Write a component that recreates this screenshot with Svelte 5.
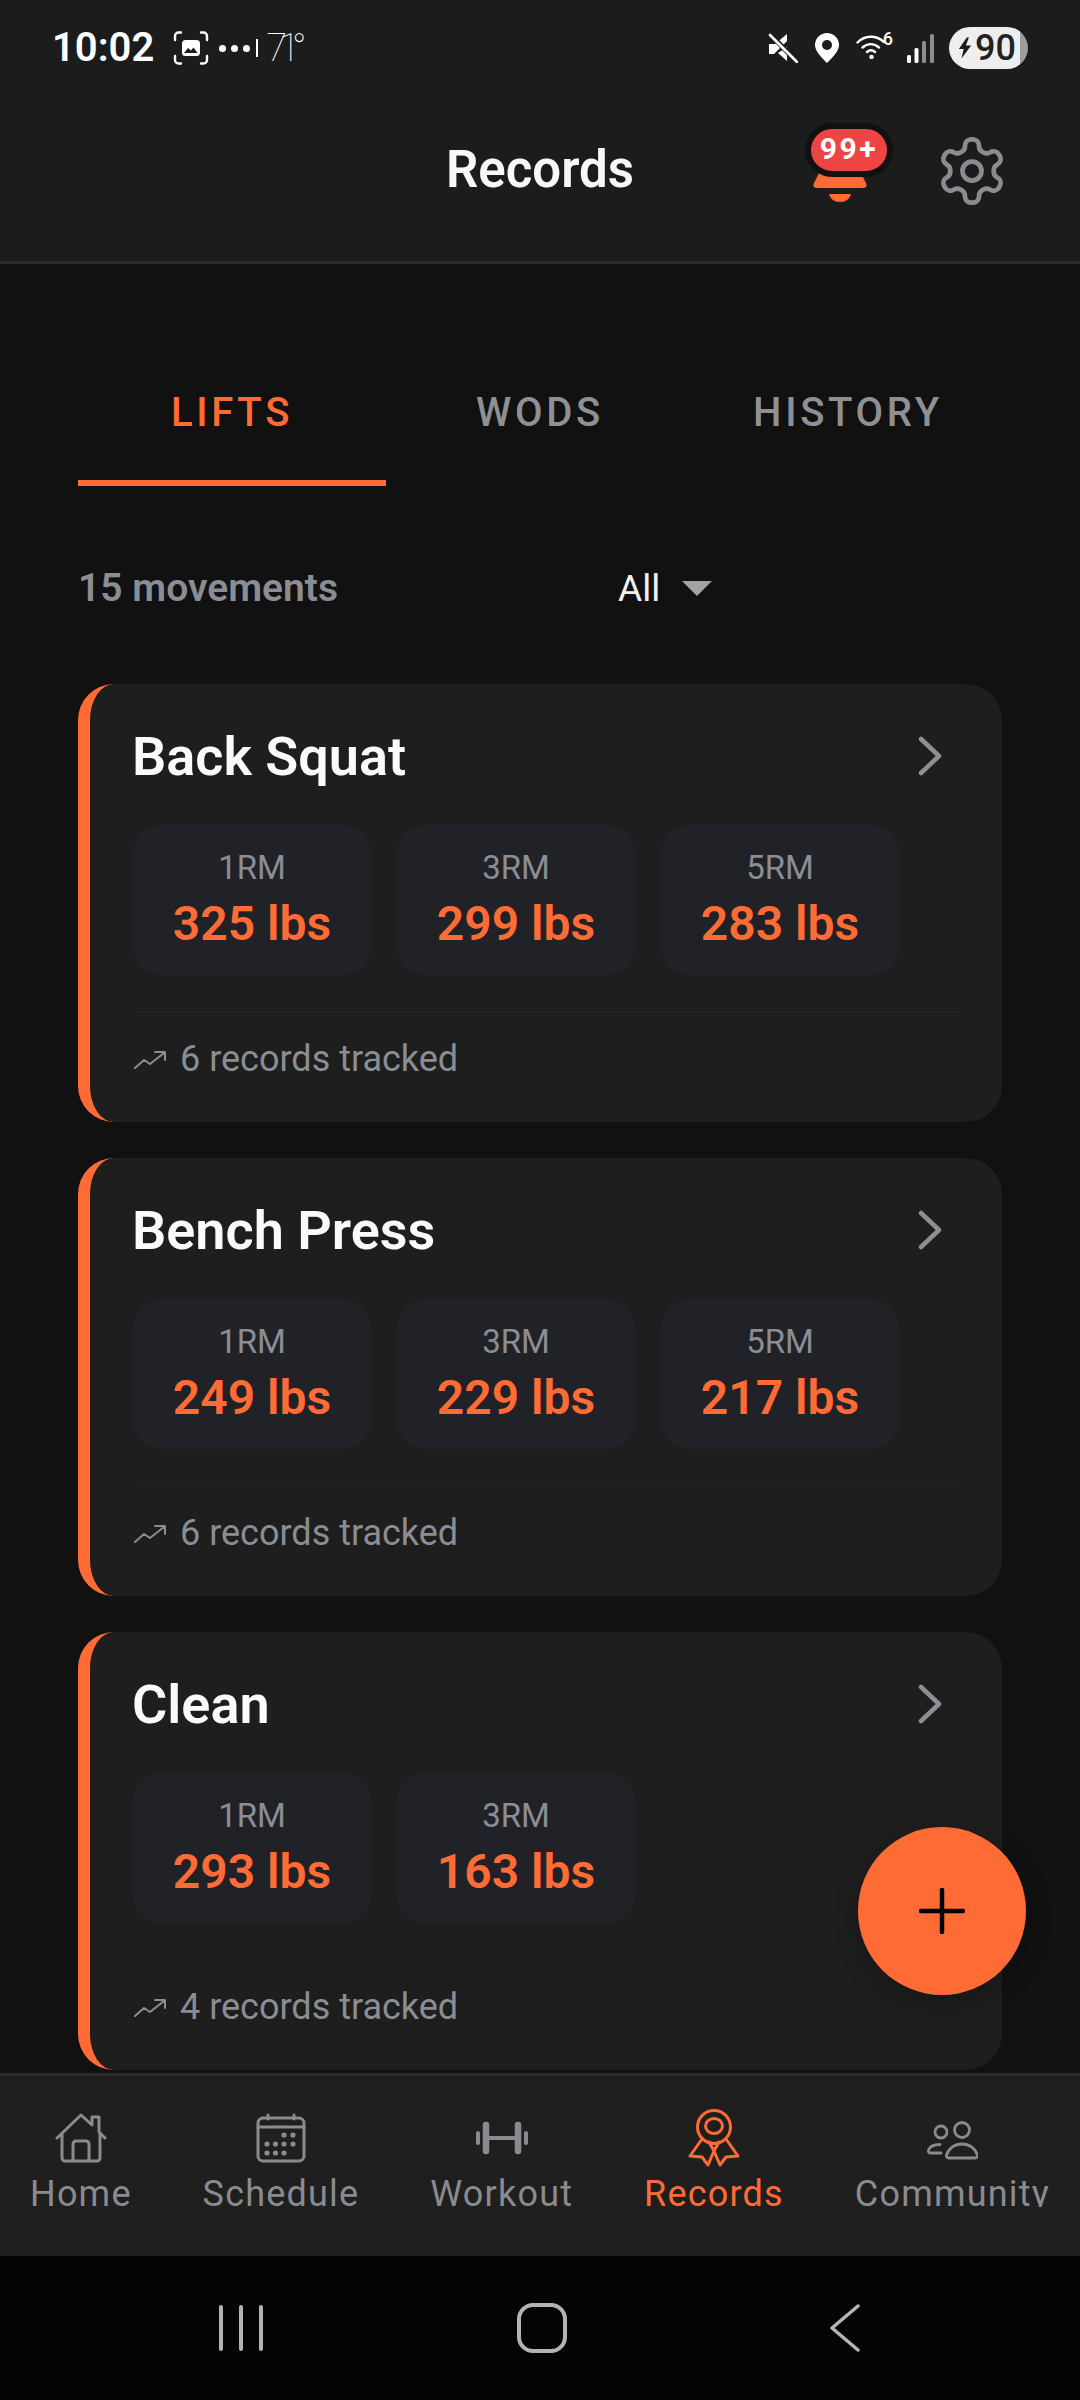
<script lang="ts">
  type Stat = { label: string; value: string };
  type Lift = { name: string; stats: Stat[]; count: number };

  const lifts: Lift[] = [
    {
      name: "Back Squat",
      count: 6,
      stats: [
        { label: "1RM", value: "325 lbs" },
        { label: "3RM", value: "299 lbs" },
        { label: "5RM", value: "283 lbs" },
      ],
    },
    {
      name: "Bench Press",
      count: 6,
      stats: [
        { label: "1RM", value: "249 lbs" },
        { label: "3RM", value: "229 lbs" },
        { label: "5RM", value: "217 lbs" },
      ],
    },
    {
      name: "Clean",
      count: 4,
      stats: [
        { label: "1RM", value: "293 lbs" },
        { label: "3RM", value: "163 lbs" },
      ],
    },
  ];

  const tabs = ["LIFTS", "WODS", "HISTORY"];
  let active = $state("LIFTS");
</script>

<div class="screen">
  <header class="header">
    <div class="status">
      <div class="status-left">
        <span class="time">10:02</span>
        <svg class="shot" viewBox="0 0 36 34" fill="none" stroke="#fff" stroke-width="2.4" stroke-linecap="round">
          <path d="M2 9V5a3.5 3.5 0 0 1 3.5-3.5H8M28 1.500h2.500A3.500 3.500 0 0 1 34 5v4M34 25v4a3.500 3.500 0 0 1-3.500 3.500H28M8 32.500H5.500A3.500 3.500 0 0 1 2 29v-4" />
          <rect x="9" y="9" width="18" height="16" rx="3.500" fill="#fff" stroke="none" />
          <path d="M11 22l4-5 3 2.500 2.500-3 4 5.500z" fill="#1c1c1c" stroke="none" />
        </svg>
        <span class="dots"><i></i><i></i><i></i></span>
        <span class="tick"></span>
        <span class="temp">71°</span>
      </div>
      <div class="status-right">
        <svg class="mute" viewBox="0 0 30 30">
          <path d="M1 11h6l12-10v7L6 21H1z" fill="#fff" />
          <path d="M10 20l9 8V14z" fill="#fff" />
          <path d="M3 2l26 27" stroke="#1c1c1c" stroke-width="5" />
          <path d="M2 2l27 27" stroke="#fff" stroke-width="2.600" stroke-linecap="round" />
        </svg>
        <svg class="pin" viewBox="0 0 24 30">
          <path fill-rule="evenodd" fill="#fff" d="M12 0a12 12 0 0 1 12 12c0 6-6 12-12 18C6 24 0 18 0 12A12 12 0 0 1 12 0zm0 7a5 5 0 1 0 0 10 5 5 0 0 0 0-10z" />
        </svg>
        <svg class="wifi" viewBox="0 0 30 26" fill="none" stroke="#fff" stroke-width="2.400" stroke-linecap="round">
          <path d="M1.500 9.500C9 2 20 2 28 9M6.500 14.500c5-4.500 11.500-4.500 16.500 0M11 19c2.500-2.200 5.500-2.200 8 0" />
          <circle cx="15.500" cy="24" r="2.200" fill="#fff" stroke="none" />
        </svg>
        <span class="wifi-num">6</span>
        <svg class="signal" viewBox="0 0 27 29">
          <rect x="0" y="21" width="4" height="8" rx="1.500" fill="#fff" />
          <rect x="7.500" y="14" width="4" height="15" rx="1.500" fill="#fff" />
          <rect x="15" y="7" width="4" height="22" rx="1.500" fill="#8c8c8c" />
          <rect x="23" y="0" width="4" height="29" rx="1.500" fill="#8c8c8c" />
        </svg>
        <div class="battery">
          <svg class="bolt" viewBox="0 0 16 24"><path d="M10 0L1 13h5.500L4 24l11-15H9l3.500-9z" fill="#1c1c1c" /></svg>
          <span>90</span>
        </div>
      </div>
    </div>
    <div class="toolbar">
      <h1>Records</h1>
      <div class="actions">
        <div class="bell">
          <svg viewBox="0 0 54 55">
            <path d="M12 0h30l5 24 6 12c1.500 2.500 0 5-3 5H4c-3 0-4.500-2.500-3-5l6-12z" fill="#ff6b35" />
            <path d="M16 47h22c-1 4.500-5 8-11 8s-10-3.500-11-8z" fill="#ff6b35" />
          </svg>
          <span class="badge">99+</span>
        </div>
        <svg class="gear" viewBox="0 0 24 24" fill="none" stroke="#8b8c91" stroke-width="1.500" stroke-linecap="round" stroke-linejoin="round">
          <path d="M12.220 2h-.44a2 2 0 0 0-2 2v.18a2 2 0 0 1-1 1.730l-.43.25a2 2 0 0 1-2 0l-.15-.08a2 2 0 0 0-2.730.73l-.22.38a2 2 0 0 0 .73 2.730l.15.1a2 2 0 0 1 1 1.720v.51a2 2 0 0 1-1 1.740l-.15.09a2 2 0 0 0-.73 2.730l.22.38a2 2 0 0 0 2.730.73l.15-.08a2 2 0 0 1 2 0l.43.25a2 2 0 0 1 1 1.730V20a2 2 0 0 0 2 2h.44a2 2 0 0 0 2-2v-.18a2 2 0 0 1 1-1.730l.43-.25a2 2 0 0 1 2 0l.15.08a2 2 0 0 0 2.730-.73l.22-.39a2 2 0 0 0-.73-2.730l-.15-.08a2 2 0 0 1-1-1.740v-.5a2 2 0 0 1 1-1.740l.15-.09a2 2 0 0 0 .73-2.730l-.22-.38a2 2 0 0 0-2.730-.73l-.15.08a2 2 0 0 1-2 0l-.43-.25a2 2 0 0 1-1-1.730V4a2 2 0 0 0-2-2z" />
          <circle cx="12" cy="12" r="3" />
        </svg>
      </div>
    </div>
  </header>

  <main class="main">
    <div class="tabs">
      {#each tabs as tab}
        <button type="button" class="tab" class:active={active === tab} onclick={() => (active = tab)}>{tab}</button>
      {/each}
    </div>

    <div class="summary">
      <span class="count">15 movements</span>
      <div class="filter">
        <span>All</span>
        <i class="caret"></i>
      </div>
    </div>

    <div class="list">
      {#each lifts as lift}
        <article class="card">
          <div class="card-head">
            <h2>{lift.name}</h2>
            <svg class="chev" viewBox="0 0 24 40" fill="none" stroke="#8e8f94" stroke-width="4.500" stroke-linecap="round" stroke-linejoin="round">
              <path d="M3 3l18 17L3 37" />
            </svg>
          </div>
          <div class="stats">
            {#each lift.stats as stat}
              <div class="stat">
                <span class="stat-label">{stat.label}</span>
                <span class="stat-value">{stat.value}</span>
              </div>
            {/each}
          </div>
          <div class="card-foot">
            <svg class="trend" viewBox="0 0 32 18" fill="none" stroke="#8b8d95" stroke-width="2" stroke-linecap="round" stroke-linejoin="round">
              <path d="M1 17l9-8 6 4L30 2M21 1h10v8" />
            </svg>
            <span>{lift.count} records tracked</span>
          </div>
        </article>
      {/each}
    </div>
  </main>

  <button type="button" class="fab" aria-label="Add record">
    <svg viewBox="0 0 46 46" fill="none" stroke="#000" stroke-width="4.500" stroke-linecap="round">
      <path d="M23 2v42M2 23h42" />
    </svg>
  </button>

  <nav class="tabbar">
    <div class="nav-item">
      <svg class="nav-icon" viewBox="0 0 52 50" fill="none" stroke="currentColor" stroke-width="3" stroke-linecap="round" stroke-linejoin="round">
        <path d="M2 25L26 2l11 10V4h7v15l6 6M7 21v24a3 3 0 0 0 3 3h32a3 3 0 0 0 3-3V21M18 48V31a3 3 0 0 1 3-3h10a3 3 0 0 1 3 3v17" />
      </svg>
      <span>Home</span>
    </div>
    <div class="nav-item">
      <svg class="nav-icon" viewBox="0 0 50 50" fill="none" stroke="currentColor" stroke-width="3" stroke-linecap="round">
        <rect x="2" y="5" width="46" height="43" rx="5" />
        <path d="M2 14h46M12 2v4M38 2v4" />
        <g fill="currentColor" stroke="none">
          <circle cx="28" cy="22" r="2.600" /><circle cx="37" cy="22" r="2.600" />
          <circle cx="11" cy="31" r="2.600" /><circle cx="19.500" cy="31" r="2.600" /><circle cx="28" cy="31" r="2.600" /><circle cx="37" cy="31" r="2.600" />
          <circle cx="11" cy="40" r="2.600" /><circle cx="19.500" cy="40" r="2.600" /><circle cx="28" cy="40" r="2.600" />
        </g>
      </svg>
      <span>Schedule</span>
    </div>
    <div class="nav-item">
      <svg class="nav-icon" viewBox="0 0 52 50" fill="none" stroke="currentColor" stroke-linecap="round">
        <path d="M2 20v10M50 20v10" stroke-width="4" />
        <path d="M10 12v26M42 12v26" stroke-width="6.500" />
        <path d="M12 25h28" stroke-width="4" />
      </svg>
      <span>Workout</span>
    </div>
    <div class="nav-item current">
      <svg class="nav-icon tall" viewBox="0 0 52 58" fill="none" stroke="currentColor" stroke-width="3" stroke-linejoin="round" stroke-linecap="round">
        <circle cx="26" cy="18" r="16.500" />
        <ellipse cx="26" cy="17" rx="8.500" ry="7.500" />
        <path d="M14 30L2 47l12 1 6 8 6-14 6 14 6-8 12-1-12-17M26 42l-5-9M26 42l5-9" />
      </svg>
      <span>Records</span>
    </div>
    <div class="nav-item">
      <svg class="nav-icon" viewBox="0 0 52 50" fill="none" stroke="currentColor" stroke-width="2.800" stroke-linecap="round">
        <circle cx="36" cy="17" r="7.500" />
        <circle cx="15" cy="19" r="6" />
        <path d="M23 45h26c2 0 3-1.500 2.500-3C49 35 43 31 36 31s-13 4-15.500 11c-.5 1.500.5 3 2.500 3z" />
        <path d="M15 40H5c-2 0-3-1-2.500-3 1.500-3.500 6-5.500 11.500-5.500" />
      </svg>
      <!-- the app cuts this label's descender, same as the reference -->
      <span class="clipped">Community</span>
    </div>
  </nav>

  <div class="sysnav">
    <div class="bars"><i></i><i></i><i></i></div>
    <div class="home-btn"></div>
    <svg class="back" viewBox="0 0 30 48" fill="none" stroke="#b4b4b4" stroke-width="3.500" stroke-linecap="round" stroke-linejoin="round">
      <path d="M28 2L2 24l26 22" />
    </svg>
  </div>
</div>

<style>
  :global(body) {
    margin: 0;
    background: #111111;
  }

  .screen {
    position: relative;
    width: 1080px;
    height: 2400px;
    overflow: hidden;
    display: flex;
    flex-direction: column;
    background: #111111;
    font-family: Roboto, "Liberation Sans", sans-serif;
    color: #fff;
  }

  .header {
    height: 264px;
    box-sizing: border-box;
    flex: none;
    background: #1c1c1c;
    border-bottom: 3px solid #2c2c2c;
  }

  .status {
    height: 96px;
    padding: 0 52px;
    display: flex;
    align-items: center;
    justify-content: space-between;
  }

  .status-left,
  .status-right {
    display: flex;
    align-items: center;
  }

  .time {
    font-size: 40px;
    font-weight: 600;
    line-height: 48px;
  }

  .shot {
    width: 36px;
    height: 34px;
    margin-left: 19px;
  }

  .dots {
    display: flex;
    gap: 5px;
    margin-left: 10px;
  }

  .dots i {
    width: 7px;
    height: 7px;
    border-radius: 50%;
    background: #fff;
  }

  .tick {
    width: 2px;
    height: 18px;
    background: #fff;
    margin-left: 6px;
  }

  .temp {
    font-size: 38px;
    font-weight: 100;
    line-height: 48px;
    letter-spacing: -8px;
    margin-left: 8px;
  }

  .mute {
    width: 30px;
    height: 30px;
  }

  .pin {
    width: 24px;
    height: 30px;
    margin-left: 17px;
  }

  .wifi {
    width: 30px;
    height: 26px;
    margin: -4px 0 0 17px;
  }

  .wifi-num {
    font-size: 18px;
    line-height: 18px;
    font-weight: 500;
    margin: -18px 0 0 -3px;
  }

  .signal {
    width: 27px;
    height: 29px;
    margin-left: 14px;
  }

  .battery {
    width: 79px;
    height: 42px;
    margin-left: 15px;
    border-radius: 21px;
    background: linear-gradient(90deg, #eeeeee 90%, #9c9c9c 90%);
    display: flex;
    align-items: center;
    padding-left: 9px;
    box-sizing: border-box;
    color: #222;
    font-size: 36px;
    font-weight: 500;
    margin-right: 0;
  }

  .bolt {
    width: 14px;
    height: 22px;
    margin-right: 3px;
  }

  .toolbar {
    position: relative;
    height: 144px;
    display: flex;
    align-items: center;
    justify-content: center;
  }

  h1 {
    margin: 0;
    font-size: 51px;
    font-weight: 600;
    line-height: 60px;
    color: #f7f8fa;
    position: relative;
    top: 2px;
  }

  .actions {
    position: absolute;
    right: 70px;
    top: 37px;
    display: flex;
    align-items: flex-start;
    gap: 67px;
  }

  .bell {
    position: relative;
    width: 54px;
    height: 71px;
    padding-top: 14px;
    box-sizing: border-box;
  }

  .bell svg {
    display: block;
    width: 54px;
    height: 55px;
  }

  .badge {
    position: absolute;
    left: -8px;
    top: -10px;
    width: 76px;
    height: 42px;
    border: 6px solid #111111;
    border-radius: 27px;
    background: #ef4444;
    font-size: 30px;
    font-weight: 700;
    line-height: 40px;
    letter-spacing: 2.500px;
    text-align: center;
    color: #fff;
  }

  .gear {
    width: 76px;
    height: 76px;
  }

  .main {
    flex: 1;
    min-height: 0;
    overflow: hidden;
    padding: 124px 78px 0;
  }

  .tabs {
    display: flex;
  }

  .tab {
    flex: 1;
    height: 98px;
    padding: 0 0 42px;
    border: none;
    border-bottom: 6px solid transparent;
    background: none;
    font: 500 40px/48px Roboto, sans-serif;
    letter-spacing: 3.700px;
    color: #8f9094;
    cursor: pointer;
  }

  .tab.active {
    color: #ff6b35;
    border-bottom-color: #ff6b35;
  }

  .summary {
    display: flex;
    align-items: center;
    justify-content: space-between;
    height: 48px;
    margin-top: 78px;
  }

  .count {
    font-size: 39px;
    font-weight: 600;
    color: #8b8d95;
  }

  .filter {
    width: 384px;
    display: flex;
    align-items: center;
    gap: 22px;
    font-size: 37px;
    color: #f2f2f2;
  }

  .caret {
    width: 0;
    height: 0;
    border-left: 15px solid transparent;
    border-right: 15px solid transparent;
    border-top: 15px solid #a3a3a3;
  }

  .list {
    display: flex;
    flex-direction: column;
    gap: 36px;
    margin-top: 72px;
  }

  .card {
    height: 438px;
    box-sizing: border-box;
    padding: 42px 0 0 42px;
    border-left: 12px solid #ff6b35;
    border-radius: 36px;
    background: #1e1e1e;
  }

  .card-head {
    display: flex;
    align-items: center;
    justify-content: space-between;
    height: 60px;
    padding-right: 60px;
  }

  h2 {
    margin: 0;
    font-size: 54px;
    font-weight: 600;
    line-height: 60px;
    color: #f9fafb;
    position: relative;
    top: 1px;
  }

  .chev {
    width: 24px;
    height: 40px;
  }

  .stats {
    display: flex;
    gap: 24px;
    margin-top: 39px;
  }

  .stat {
    width: 240px;
    height: 150px;
    box-sizing: border-box;
    padding-top: 23px;
    border-radius: 30px;
    background: #212227;
    display: flex;
    flex-direction: column;
    align-items: center;
  }

  .stat-label {
    font-size: 33px;
    line-height: 40px;
    color: #8b8d95;
  }

  .stat-value {
    margin-top: 9px;
    font-size: 48px;
    line-height: 54px;
    font-weight: 600;
    color: #ff6b35;
  }

  .card-foot {
    display: flex;
    align-items: center;
    gap: 14px;
    margin: 36px 42px 0 0;
    height: 93px;
    border-top: 2px dotted #212227;
    box-sizing: border-box;
    font-size: 36px;
    color: #8b8d95;
  }

  .trend {
    width: 32px;
    height: 18px;
    margin-left: 2px;
    margin-top: 2px;
  }

  .fab {
    position: absolute;
    left: 858px;
    top: 1827px;
    width: 168px;
    height: 168px;
    padding: 0;
    border: none;
    border-radius: 50%;
    background: #ff6b35;
    box-shadow: 0 8px 24px rgba(0, 0, 0, 0.25);
    display: flex;
    align-items: center;
    justify-content: center;
    cursor: pointer;
  }

  .fab svg {
    width: 46px;
    height: 46px;
  }

  .tabbar {
    flex: none;
    height: 183px;
    box-sizing: border-box;
    padding: 37px 30px 0;
    background: #1f1f1f;
    border-top: 3px solid #2c2c2c;
    display: flex;
    justify-content: space-between;
    align-items: flex-start;
  }

  .nav-item {
    display: flex;
    flex-direction: column;
    align-items: center;
    color: #8a8b90;
    font-size: 36px;
    letter-spacing: 1.200px;
  }

  .nav-item.current {
    color: #ff6b35;
  }

  .nav-item span {
    line-height: 42px;
    margin-top: 10px;
  }

  .nav-item span.clipped {
    height: 34px;
    overflow: hidden;
  }

  .nav-icon {
    display: block;
    width: 52px;
    height: 50px;
  }

  .nav-icon.tall {
    height: 58px;
    margin-top: -4px;
    margin-bottom: -4px;
  }

  .sysnav {
    flex: none;
    height: 144px;
    background: #050505;
    position: relative;
    display: grid;
    grid-template-columns: 1fr 1fr 1fr;
    align-items: center;
    justify-items: center;
    padding: 0 120px;
    box-sizing: border-box;
  }

  .bars {
    display: flex;
    gap: 16px;
    margin-left: -38px;
  }

  .bars i {
    width: 4px;
    height: 46px;
    border-radius: 2px;
    background: #b4b4b4;
  }

  .home-btn {
    width: 42px;
    height: 42px;
    border: 4px solid #b4b4b4;
    border-radius: 16px;
    margin-left: 3px;
  }

  .back {
    width: 30px;
    height: 48px;
    margin-left: 50px;
  }
</style>
